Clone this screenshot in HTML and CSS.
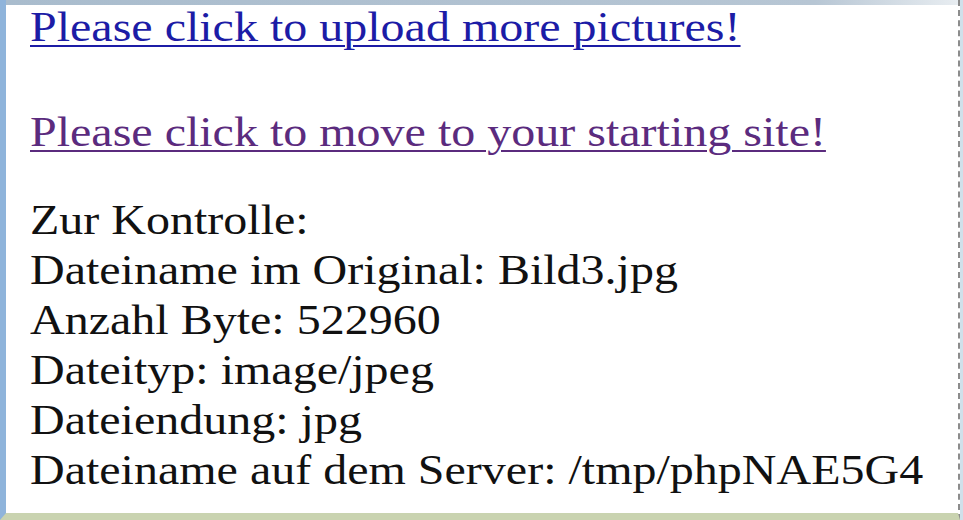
FILE: index.html
```html
<!DOCTYPE html>
<html lang="de">
<head>
    <meta charset="UTF-8">
    <title>Upload</title>
    <link rel="stylesheet" href="styles.css">
</head>
<body>
    <div class="window">
        <div class="content">
            <p class="link-line first"><a href="#" class="upload">Please click to upload more pictures!</a></p>
            <p class="link-line"><a href="#" class="visited">Please click to move to your starting site!</a></p>

            <!-- Upload info -->
            <div class="info">
                <p>Zur Kontrolle:</p>
                <p>Dateiname im Original: Bild3.jpg</p>
                <p>Anzahl Byte: 522960</p>
                <p>Dateityp: image/jpeg</p>
                <p>Dateiendung: jpg</p>
                <p>Dateiname auf dem Server: /tmp/phpNAE5G4</p>
            </div>
        </div>
    </div>
</body>
</html>
```

FILE: styles.css
```css
* {
    margin: 0;
    padding: 0;
    box-sizing: border-box;
}

body {
    width: 963px;
    height: 520px;
    background-color: #cfe0ea;
    overflow: hidden;
}

.window {
    height: 520px;
    width: 960px;
    background: linear-gradient(to right, #a9bccd 0%, #b7c6d4 85%, #e8edf1 100%) top / 100% 5px no-repeat, #fff;
    border-left: 6px solid #8fb4db;
    border-bottom: 7px solid #c9d3b0;
    border-right: 2px dashed #8c8c8c;
    padding-top: 2px;
    overflow: hidden;
}

/* the screenshot is stretched sideways */
.content {
    width: 820px;
    padding-left: 24px;
    font-family: "Liberation Serif", "Times New Roman", serif;
    font-size: 42px;
    line-height: 50px;
    color: #111;
    transform: scaleX(1.143);
    transform-origin: 24px 0;
}

.link-line {
    margin-bottom: 52px;
}

.link-line.first {
    margin-bottom: 55px;
}

.link-line a {
    text-decoration: underline;
    text-decoration-thickness: 2px;
    text-underline-offset: 4px;
}

.upload {
    color: #1c1ca6;
}

.visited {
    color: #5b2b7e;
}

.info {
    margin-top: -14px;
}
```
